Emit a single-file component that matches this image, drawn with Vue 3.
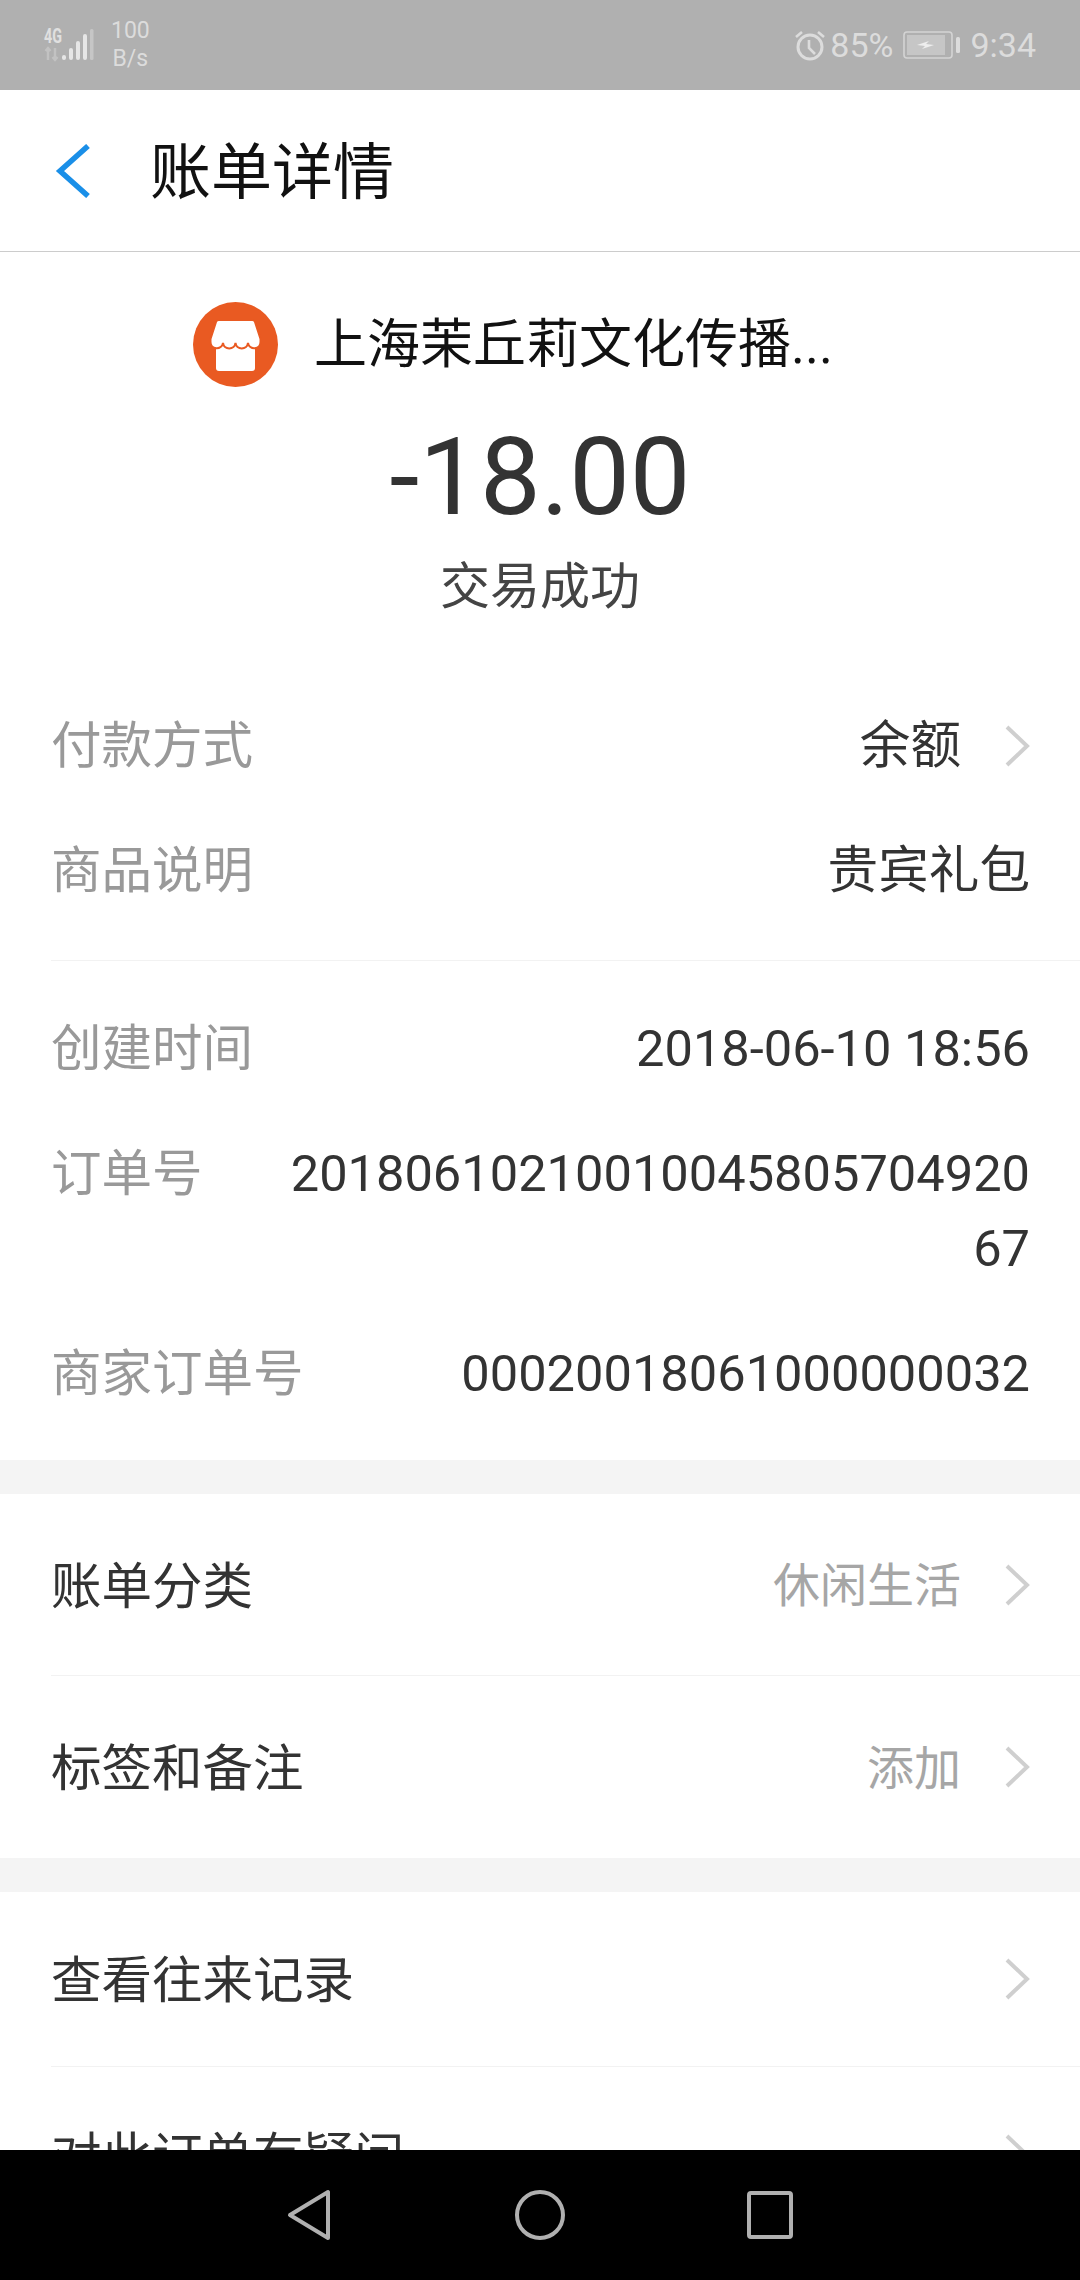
<template>
  <div class="page">
    <!-- 状态栏 -->
    <div class="status-bar">
      <div class="status-left">
        <svg class="signal" width="50" height="36" viewBox="0 0 50 36">
          <text x="0" y="16" class="net-text" textLength="18" lengthAdjust="spacingAndGlyphs">4G</text>
          <path d="M4 33V21M1.500 24L4 21l2.500 3M11 21v12M8.500 30l2.500 3 2.500-3" stroke="#c2c2c2" stroke-width="2.4" fill="none" />
          <rect x="18" y="28" width="4" height="5" rx="2" fill="#e6e6e6" />
          <rect x="25" y="21" width="4" height="12" rx="2" fill="#e6e6e6" />
          <rect x="32" y="14" width="4" height="19" rx="2" fill="#e6e6e6" />
          <rect x="39" y="7" width="4" height="26" rx="2" fill="#e6e6e6" />
          <rect x="46" y="2" width="3.500" height="31" rx="1.500" fill="#c6c6c6" />
        </svg>
        <div class="speed">
          <span>100</span>
          <span>B/s</span>
        </div>
      </div>
      <div class="status-right">
        <svg width="32" height="32" viewBox="0 0 32 32" fill="none" stroke="#dcdcdc" stroke-width="3">
          <circle cx="16" cy="18" r="12" />
          <path d="M15 11v8l6 6M2 8l6-5M30 8l-6-5" stroke-width="2.6" />
        </svg>
        <span class="pct">85%</span>
        <svg class="battery" width="58" height="28" viewBox="0 0 58 28">
          <rect x="1" y="1" width="48" height="26" rx="3" fill="none" stroke="#d4d4d4" stroke-width="1.6" />
          <rect x="4" y="4" width="38" height="20" fill="#c6c6c6" />
          <path d="M14 14l12-4-3 3 8 1-12 4 3-3z" fill="#eee" />
          <rect x="53" y="6" width="4" height="16" rx="1.5" fill="#dcdcdc" />
        </svg>
        <span class="time">9:34</span>
      </div>
    </div>

    <!-- 标题栏 -->
    <div class="nav-bar">
      <svg class="back" width="38" height="54" viewBox="0 0 38 54" fill="none">
        <path d="M33 2L5 27l28 25" stroke="#1a8fe8" stroke-width="5.5" />
      </svg>
      <h1 class="title">账单详情</h1>
    </div>

    <div class="content">
      <!-- 商家和金额 -->
      <div class="summary">
        <div class="merchant">
          <svg class="store" width="85" height="85" viewBox="0 0 85 85">
            <circle cx="42.5" cy="42.5" r="42.5" fill="#e95a22" />
            <rect x="23" y="42" width="39" height="27" rx="3" fill="#fff" />
            <path d="M26 18h33a3 3 0 0 1 3 2l5.500 17v3a6.300 6.300 0 0 1-12.500 1 6.300 6.300 0 0 1-12.500 0 6.300 6.300 0 0 1-12.500 0 6.300 6.300 0 0 1-12.500-1v-3l5.500-17a3 3 0 0 1 3-2z" fill="#fff" stroke="#e95a22" stroke-width="2" />
          </svg>
          <span class="merchant-name">上海茉丘莉文化传播...</span>
        </div>
        <div class="amount">-18.00</div>
        <div class="result">交易成功</div>
      </div>

      <!-- 订单信息 -->
      <div class="info-group first">
        <div class="info-row">
          <span class="label">付款方式</span>
          <span class="value">余额</span>
          <svg class="arrow" width="26" height="44" viewBox="0 0 26 44" fill="none">
            <path d="M3 3l20 19L3 41" stroke="#cfcfcf" stroke-width="4" />
          </svg>
        </div>
        <div class="info-row">
          <span class="label">商品说明</span>
          <span class="value">贵宾礼包</span>
        </div>
      </div>
      <div class="info-group last">
        <div v-for="item in orderInfo" :key="item.label" class="info-row">
          <span class="label">{{ item.label }}</span>
          <span class="value">{{ item.value }}</span>
        </div>
      </div>

      <div class="gap"></div>

      <div v-for="(group, i) in menuGroups" :key="i" :class="['menu-group', { compact: i > 0 }]">
        <div v-if="i > 0" class="gap"></div>
        <div v-for="row in group" :key="row.label" class="menu-row">
          <span class="menu-label">{{ row.label }}</span>
          <span class="menu-extra">{{ row.extra }}</span>
          <svg class="arrow" width="26" height="44" viewBox="0 0 26 44" fill="none">
            <path d="M3 3l20 19L3 41" stroke="#cfcfcf" stroke-width="4" />
          </svg>
        </div>
      </div>
    </div>

    <!-- 底部导航 -->
    <div class="bottom-bar">
      <svg class="nav-back" width="44" height="52" viewBox="0 0 44 52" fill="none" stroke="#b0b0b0" stroke-width="4" stroke-linejoin="round">
        <path d="M41 3v46L3 26z" />
      </svg>
      <svg width="52" height="52" viewBox="0 0 52 52" fill="none" stroke="#b0b0b0" stroke-width="4">
        <circle cx="26" cy="26" r="23" />
      </svg>
      <svg width="46" height="48" viewBox="0 0 46 48" fill="none" stroke="#b0b0b0" stroke-width="4" stroke-linejoin="round">
        <rect x="2" y="2" width="42" height="44" rx="2" />
      </svg>
    </div>
  </div>
</template>

<script setup>
// 订单信息
const orderInfo = [
  { label: "创建时间", value: "2018-06-10 18:56" },
  { label: "订单号", value: "2018061021001004580570492067" },
  { label: "商家订单号", value: "00020018061000000032" },
];

// 下方菜单
const menuGroups = [
  [
    { label: "账单分类", extra: "休闲生活" },
    { label: "标签和备注", extra: "添加" },
  ],
  [
    { label: "查看往来记录", extra: "" },
    { label: "对此订单有疑问", extra: "" },
  ],
];
</script>

<style>
html,
body {
  margin: 0;
  background: #fff;
}
</style>

<style scoped>
.page {
  display: flex;
  flex-direction: column;
  width: 1080px;
  height: 2280px;
  overflow: hidden;
  background: #fff;
  font-family: Roboto, "Noto Sans CJK SC", sans-serif;
}

.status-bar {
  flex: none;
  display: flex;
  align-items: center;
  justify-content: space-between;
  height: 90px;
  padding: 0 44px;
  box-sizing: border-box;
  background: #b0b0b0;
  color: #dcdcdc;
}

.status-left {
  display: flex;
  align-items: center;
  gap: 17px;
}

.signal {
  overflow: visible;
}

.net-text {
  font-size: 20px;
  font-weight: 700;
  fill: #e0e0e0;
}

.speed {
  display: flex;
  flex-direction: column;
  align-items: center;
  font-size: 23px;
  line-height: 28px;
}

.status-right {
  display: flex;
  align-items: center;
  font-size: 34px;
}

.pct {
  margin-left: 4px;
}

.battery {
  margin: 0 9px 0 10px;
}

.nav-bar {
  flex: none;
  display: flex;
  align-items: center;
  height: 162px;
  padding-left: 55px;
  box-sizing: border-box;
  border-bottom: 1px solid #ccc;
}

.title {
  margin: 0 0 6px 57px;
  font-size: 61px;
  font-weight: 400;
  color: #111;
}

.content {
  flex: 1;
  min-height: 0;
  overflow: hidden;
}

.summary {
  display: flex;
  flex-direction: column;
  align-items: center;
  padding-top: 50px;
}

.merchant {
  align-self: flex-start;
  display: flex;
  align-items: center;
  height: 85px;
  margin-left: 193px;
  gap: 36px;
}

.merchant-name {
  padding-top: 2px;
  font-size: 53px;
  line-height: 83px;
  color: #111;
}

.amount {
  margin-top: 27px;
  font-size: 108px;
  line-height: 126px;
  color: #333;
}

.result {
  margin-top: 12px;
  font-size: 50px;
  line-height: 70px;
  color: #444;
}

.info-group {
  margin-left: 51px;
  padding: 26px 50px 26px 0;
  border-bottom: 1px solid #f2f2f2;
}

.info-group.first {
  padding-top: 62px;
}

.info-group.last {
  padding-bottom: 23px;
  border-bottom: none;
}

.info-row {
  display: flex;
  align-items: flex-start;
  justify-content: space-between;
  padding: 24px 0 26px;
  font-size: 50.5px;
  line-height: 75px;
}

.label {
  flex: none;
  color: #999;
}

.value {
  flex: 1;
  min-width: 0;
  margin-left: 78px;
  font-size: 50.6px;
  text-align: right;
  word-break: break-all;
  color: #333;
}

.arrow {
  flex: none;
  margin-left: 43px;
  align-self: center;
}

.gap {
  height: 34px;
  background: #f4f4f4;
}

.menu-row {
  display: flex;
  align-items: center;
  height: 182px;
  box-sizing: border-box;
  margin-left: 51px;
  padding-right: 50px;
  font-size: 50.5px;
  border-bottom: 1px solid #f2f2f2;
}

.menu-row:last-child {
  border-bottom: none;
}

.compact .menu-row {
  height: 175px;
}

.menu-label {
  margin-bottom: 6px;
  color: #333;
}

.menu-extra {
  flex: 1;
  margin-bottom: 6px;
  font-size: 47px;
  text-align: right;
  color: #a6a6a6;
}

.bottom-bar {
  flex: none;
  display: flex;
  align-items: center;
  justify-content: center;
  gap: 181px;
  height: 130px;
  background: #000;
}

.nav-back {
  margin-right: 2px;
}
</style>
